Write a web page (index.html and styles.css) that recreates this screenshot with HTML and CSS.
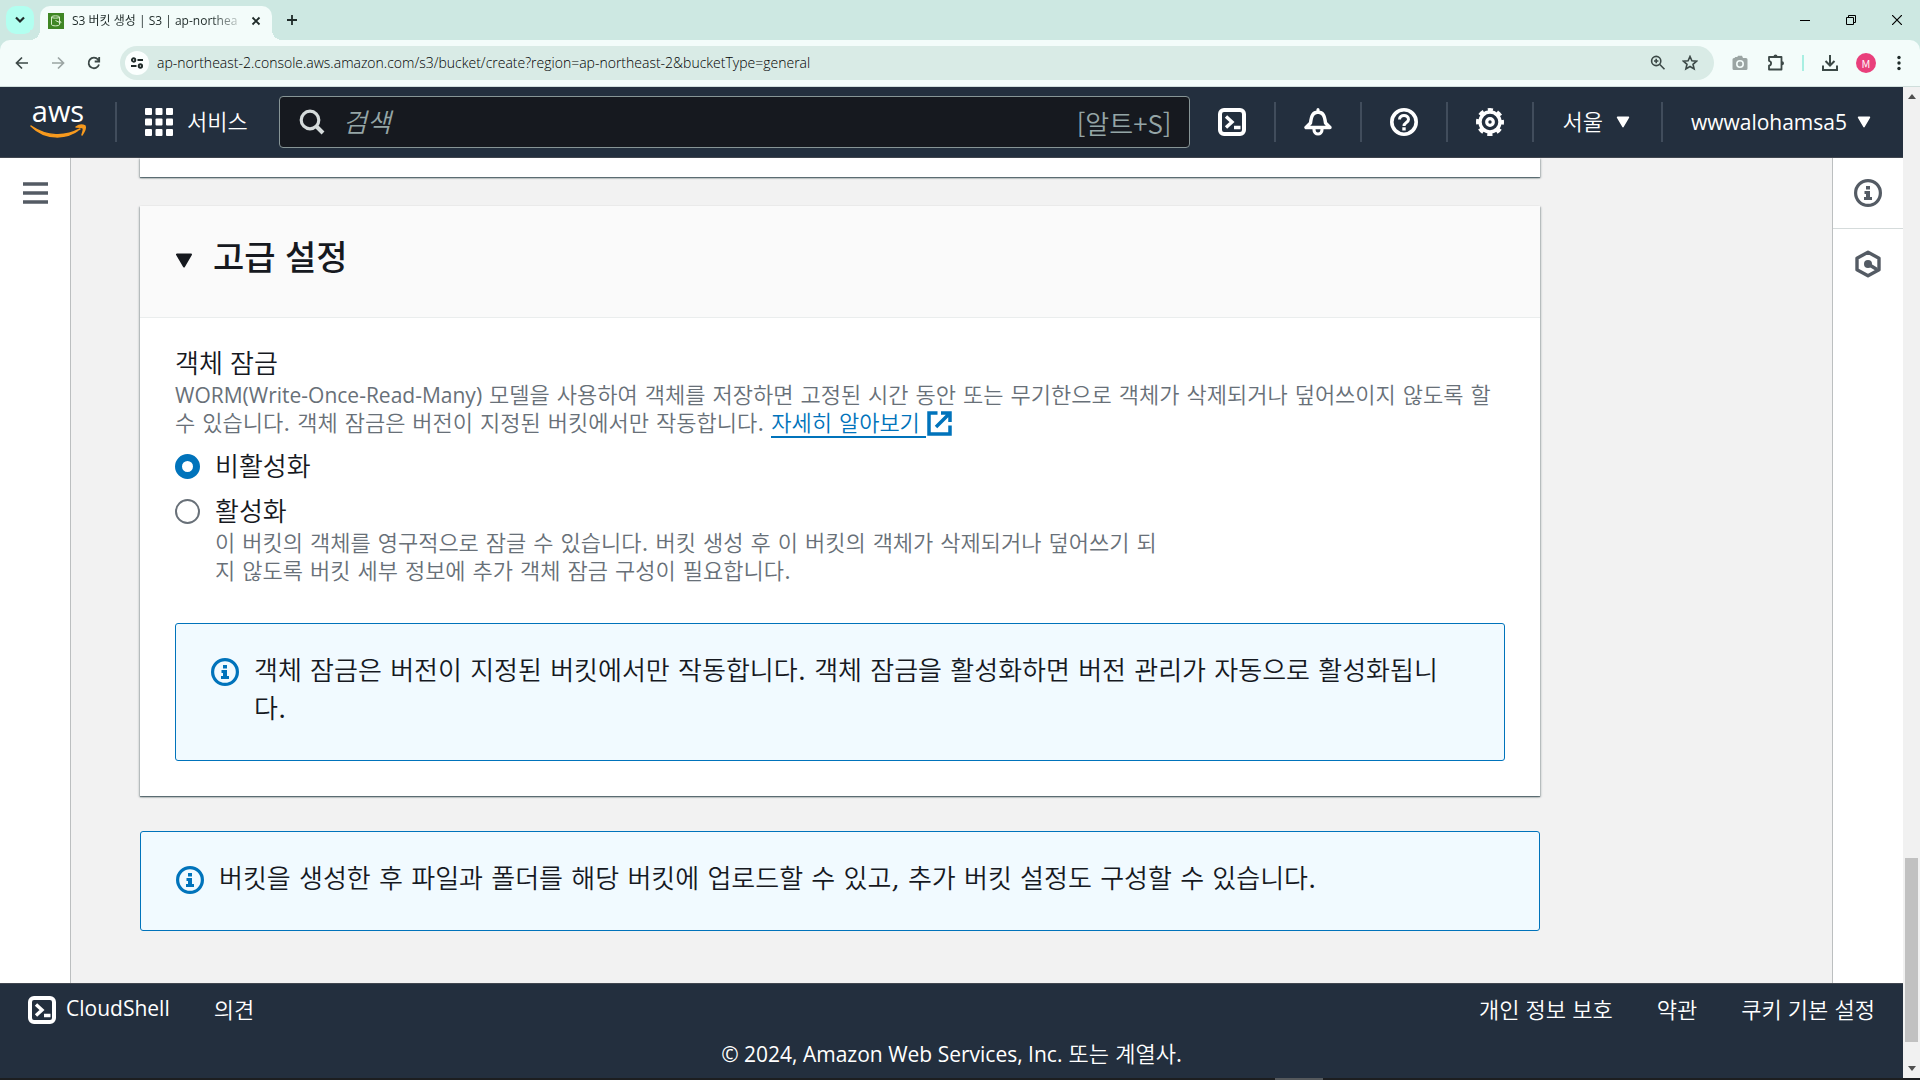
FILE: index.html
```html
<!DOCTYPE html>
<html lang="ko">
<head>
<meta charset="utf-8">
<meta name="viewport" content="width=device-width, initial-scale=1">
<title>S3 버킷 생성 | S3 | ap-northeast-2</title>
<link rel="stylesheet" href="styles.css">
</head>
<body>
<svg class="defs" aria-hidden="true">
  <symbol id="terminal" viewBox="0 0 28 28"><rect x="2" y="2" width="24" height="24" rx="4" fill="none" stroke="currentColor" stroke-width="4"/><path d="M8 8.500l6 5.500-6 5.500M16 19.500h6.500" fill="none" stroke="currentColor" stroke-width="3.400"/></symbol>
  <symbol id="info" viewBox="0 0 28 28"><circle cx="14" cy="14" r="12.400" fill="none" stroke="currentColor" stroke-width="3.200"/><path d="M12 7h4v3.500h-4zM10.500 12H16v6h2v3h-8v-3h2v-3h-1.500z" fill="currentColor"/></symbol>
  <symbol id="caret" viewBox="0 0 18 15"><path d="M2 1.500h14L9 13.500z" fill="currentColor" stroke="currentColor" stroke-width="2" stroke-linejoin="round"/></symbol>
</svg>

<div class="tabstrip">
  <button class="tab-search" aria-label="탭 검색"><svg width="12" height="8" viewBox="0 0 12 8"><path d="M2 1.500l4 4 4-4" fill="none" stroke="currentColor" stroke-width="2.200"/></svg></button>
  <div class="tab">
    <svg class="favicon" width="16" height="16" viewBox="0 0 16 16"><rect width="16" height="16" fill="#3f8624"/><path d="M3.500 4v7.500c0 1.800 8 1.800 8 0V4M3.500 4c0-1.500 8-1.500 8 0s-8 1.500-8 0zM7.500 7.500l4.500 2.200c1.500.5 1.500-1-.2-1.500" fill="none" stroke="#d9f0cc"/></svg>
    <span class="tab-title">S3 버킷 생성 | S3 | ap-northea</span>
    <button class="tab-close" aria-label="탭 닫기"><svg width="10" height="10" viewBox="0 0 10 10"><path d="M1.500 1.500l7 7m0-7l-7 7" stroke="currentColor" stroke-width="1.800"/></svg></button>
  </div>
  <button class="new-tab" aria-label="새 탭"><svg width="12" height="12" viewBox="0 0 12 12"><path d="M6 1v10M1 6h10" stroke="currentColor" stroke-width="1.800"/></svg></button>
  <div class="window-controls">
    <button aria-label="최소화"><svg width="10" height="10" viewBox="0 0 10 10"><path d="M0 5.500h10" stroke="currentColor"/></svg></button>
    <button aria-label="이전 크기로"><svg width="10" height="10" viewBox="0 0 10 10"><path d="M.5 2.500h7v7h-7zM2.500 2.500v-2h7v7h-2" fill="none" stroke="currentColor"/></svg></button>
    <button aria-label="닫기"><svg width="10" height="10" viewBox="0 0 10 10"><path d="M0 0l10 10M10 0L0 10" stroke="currentColor" stroke-width="1.200"/></svg></button>
  </div>
</div>

<div class="toolbar-back">
<div class="toolbar">
  <div class="nav-buttons">
    <button aria-label="뒤로"><svg width="16" height="16" viewBox="0 0 16 16"><path d="M14 8H3M8 2.500L2.500 8 8 13.500" fill="none" stroke="currentColor" stroke-width="1.700"/></svg></button>
    <button class="off" aria-label="앞으로"><svg width="16" height="16" viewBox="0 0 16 16"><path d="M2 8h11M8 2.500L13.500 8 8 13.500" fill="none" stroke="currentColor" stroke-width="1.700"/></svg></button>
    <button aria-label="새로고침"><svg width="16" height="16" viewBox="0 0 16 16"><path d="M13 9.500A5.300 5.300 0 1 1 12 4.500L13 6M13.200 2v4.500H8.700" fill="none" stroke="currentColor" stroke-width="1.800"/></svg></button>
  </div>
  <div class="omnibox">
    <button class="site-info" aria-label="사이트 정보"><svg width="14" height="14" viewBox="0 0 14 14" fill="none" stroke="currentColor" stroke-width="1.900"><circle cx="3.600" cy="4" r="1.700"/><path d="M7.500 4H13M1 10h5.500"/><circle cx="10.400" cy="10" r="1.700"/></svg></button>
    <input class="url" type="text" aria-label="주소" value="ap-northeast-2.console.aws.amazon.com/s3/bucket/create?region=ap-northeast-2&amp;bucketType=general">
    <button aria-label="확대"><svg width="16" height="16" viewBox="0 0 16 16" fill="none" stroke="currentColor" stroke-width="1.600"><circle cx="6.200" cy="6" r="4.600"/><path d="M9.800 9.500l4.700 4.700M6.200 3.800v4.400M4 6h4.400"/></svg></button>
    <button aria-label="즐겨찾기"><svg width="16" height="16" viewBox="0 0 16 16"><path d="M8 1.500l1.900 4.300 4.700.4-3.600 3.100 1.100 4.600L8 11.500l-4.100 2.400L5 9.300 1.400 6.200l4.700-.4z" fill="none" stroke="currentColor" stroke-width="1.600"/></svg></button>
  </div>
  <div class="extensions">
    <button class="off" aria-label="캡처"><svg width="20" height="20" viewBox="0 0 20 20"><path d="M4.500 5l.8-1h2L8 2.800h4L13 5h3a1.500 1.500 0 0 1 1.500 1.500v9A1.500 1.500 0 0 1 16 17H4a1.500 1.500 0 0 1-1.500-1.500v-9A1.500 1.500 0 0 1 4 5z" fill="currentColor"/><circle cx="10" cy="11" r="3.200" fill="none" stroke="#f3fcfa" stroke-width="1.600"/></svg></button>
    <button aria-label="확장 프로그램"><svg width="20" height="20" viewBox="0 0 20 20"><path d="M3 4h12.500v12.500H3v-3.800c2.800-.6 2.800-4.300 0-4.900z" fill="none" stroke="currentColor" stroke-width="1.800" stroke-linejoin="round"/><path d="M7.500 3.500a2 2 0 0 1 4 0zM16 8.300a2 2 0 0 1 0 4z" fill="currentColor"/></svg></button>
    <span class="ext-divider"></span>
    <button aria-label="다운로드"><svg width="20" height="20" viewBox="0 0 20 20"><path d="M10 2v10M5.500 8L10 12.500 14.500 8M3 12.500V17h14v-4.500" fill="none" stroke="currentColor" stroke-width="2"/></svg></button>
    <button class="avatar" aria-label="프로필">M</button>
    <button class="menu-dots" aria-label="메뉴"><svg width="4" height="16" viewBox="0 0 4 16" fill="currentColor"><circle cx="2" cy="2.500" r="1.700"/><circle cx="2" cy="8" r="1.700"/><circle cx="2" cy="13.500" r="1.700"/></svg></button>
  </div>
</div>
</div>

<div class="viewport">
  <div class="console">
    <header class="topnav">
      <a class="logo" href="#" aria-label="AWS"><svg width="58" height="60" viewBox="0 0 58 60"><text class="logo-text" x="28" y="30" text-anchor="middle">aws</text><path d="M1 34c16 11 34 11 49 3-14 11-35 11-49-3z" fill="#f79a1e" stroke="#f79a1e" stroke-width="1.500" stroke-linejoin="round"/><path d="M46 35c3-2 7-2 9-1 1 2-1 6-3 9 1-3 2-6 1-7s-4-1-7-1z" fill="#f79a1e" stroke="#f79a1e" stroke-width="1.500" stroke-linejoin="round"/></svg></a>
      <button class="services"><svg width="28" height="28" viewBox="0 0 28 28" fill="currentColor"><rect width="7" height="7" rx="1"/><rect x="10.500" width="7" height="7" rx="1"/><rect x="21" width="7" height="7" rx="1"/><rect y="10.500" width="7" height="7" rx="1"/><rect x="10.500" y="10.500" width="7" height="7" rx="1"/><rect x="21" y="10.500" width="7" height="7" rx="1"/><rect y="21" width="7" height="7" rx="1"/><rect x="10.500" y="21" width="7" height="7" rx="1"/><rect x="21" y="21" width="7" height="7" rx="1"/></svg><span class="bar-text">서비스</span></button>
      <div class="search">
        <svg width="26" height="26" viewBox="0 0 26 26" fill="none" stroke="currentColor"><circle cx="11" cy="11" r="8.800" stroke-width="3.200"/><path d="M17 17l7 7" stroke-width="4"/></svg>
        <input class="bar-text" type="search" placeholder="검색" aria-label="검색">
        <span class="shortcut">[알트+S]</span>
      </div>
      <button class="tool" aria-label="CloudShell"><svg width="28" height="28"><use href="#terminal"/></svg></button>
      <button class="tool" aria-label="알림"><svg width="28" height="28" viewBox="0 0 28 28" fill="none" stroke="currentColor" stroke-linejoin="round" stroke-linecap="round"><path d="M2 19.500h24l-4.500-4.500C20.500 7 19 4.500 14 4 9 4.500 7.500 7 6.500 15z" stroke-width="3.400"/><path d="M14 1.500v2" stroke-width="3"/><path d="M10 21.500c0 6 8 6 8 0" stroke-width="3.200"/></svg></button>
      <button class="tool" aria-label="도움말"><svg width="28" height="28" viewBox="0 0 28 28" fill="none" stroke="currentColor"><circle cx="14" cy="14" r="12.200" stroke-width="3.600"/><path d="M9.500 11.500c0-5.500 9-5.500 9 0 0 3-4.500 3-4.500 6.500" stroke-width="3"/><path d="M14 19.300v3.200" stroke-width="3.400"/></svg></button>
      <button class="tool" aria-label="설정"><svg width="28" height="28" viewBox="0 0 28 28" fill="none" stroke="currentColor"><circle cx="14" cy="14" r="10" stroke-width="3.400"/><circle cx="14" cy="14" r="12.400" stroke-width="3.200" stroke-dasharray="5.200 4.540" stroke-dashoffset="2.600"/><circle cx="14" cy="14" r="3.300" stroke-width="3.200"/></svg></button>
      <button class="menu region"><span class="bar-text">서울</span><svg width="14" height="12"><use href="#caret"/></svg></button>
      <button class="menu account"><span class="latin">wwwalohamsa5</span><svg width="14" height="12"><use href="#caret"/></svg></button>
    </header>

    <div class="workspace">
      <nav class="side side-left">
        <button aria-label="탐색 열기"><svg width="25" height="22" viewBox="0 0 25 22"><path d="M0 2h25M0 11h25M0 20h25" stroke="currentColor" stroke-width="3.500"/></svg></button>
      </nav>

      <main class="content">
        <section class="card card-tail"></section>

        <section class="card">
          <header class="card-header">
            <h2><button class="expander"><svg width="18" height="15"><use href="#caret"/></svg><span>고급 설정</span></button></h2>
          </header>
          <div class="card-body">
            <fieldset class="field">
              <legend>객체 잠금</legend>
              <p class="hint"><span class="latin">WORM(Write-Once-Read-Many)</span> 모델을 사용하여 객체를 저장하면 고정된 시간 동안 또는 무기한으로 객체가 삭제되거나 덮어쓰이지 않도록 할<br>수 있습니다. 객체 잠금은 버전이 지정된 버킷에서만 작동합니다. <a class="learn-more" href="#"><span>자세히 알아보기</span><svg width="25" height="25" viewBox="0 0 25 25" fill="none" stroke="currentColor" stroke-width="3.500"><path d="M10.500 2H2v21h21v-8.500M14 2h9v9M22.500 2.500L9 16"/></svg></a></p>
              <div class="option">
                <input type="radio" name="object-lock" id="lock-off" checked>
                <label for="lock-off">비활성화</label>
              </div>
              <div class="option">
                <input type="radio" name="object-lock" id="lock-on" aria-describedby="lock-on-hint">
                <div>
                  <label for="lock-on">활성화</label>
                  <p class="hint" id="lock-on-hint">이 버킷의 객체를 영구적으로 잠글 수 있습니다. 버킷 생성 후 이 버킷의 객체가 삭제되거나 덮어쓰기 되<br>지 않도록 버킷 세부 정보에 추가 객체 잠금 구성이 필요합니다.</p>
                </div>
              </div>
            </fieldset>
            <div class="alert">
              <svg width="28" height="28"><use href="#info"/></svg>
              <p>객체 잠금은 버전이 지정된 버킷에서만 작동합니다. 객체 잠금을 활성화하면 버전 관리가 자동으로 활성화됩니<br>다.</p>
            </div>
          </div>
        </section>

        <div class="alert alert-page">
          <svg width="28" height="28"><use href="#info"/></svg>
          <p>버킷을 생성한 후 파일과 폴더를 해당 버킷에 업로드할 수 있고, 추가 버킷 설정도 구성할 수 있습니다.</p>
        </div>
      </main>

      <aside class="side side-right">
        <button aria-label="정보"><svg width="28" height="28"><use href="#info"/></svg></button>
        <button aria-label="도구"><svg width="28" height="28" viewBox="0 0 28 28" fill="none" stroke="currentColor"><path d="M14 2.200l11 6v11.600l-11 6-11-6V8.200z" stroke-width="3.400" stroke-linejoin="round"/><circle cx="14" cy="14" r="4" fill="currentColor" stroke="none"/><path d="M14 14l9 5.500" stroke-width="3.400"/></svg></button>
      </aside>
    </div>

    <footer class="footer">
      <div class="footer-row">
        <button class="cloudshell"><svg width="28" height="28"><use href="#terminal"/></svg><span class="latin bar-text">CloudShell</span></button>
        <a class="bar-text" href="#">의견</a>
        <div class="legal bar-text"><a href="#">개인 정보 보호</a><a href="#">약관</a><a href="#">쿠키 기본 설정</a></div>
      </div>
      <p class="copyright"><span class="latin">© 2024, Amazon Web Services, Inc.</span> 또는 계열사.</p>
    </footer>
  </div>

  <div class="scrollbar" aria-hidden="true">
    <svg width="8" height="5" viewBox="0 0 8 5"><path d="M0 5l4-5 4 5z" fill="#505050"/></svg>
    <span class="track-before"></span>
    <span class="thumb"></span>
    <span class="track-after"></span>
    <svg width="8" height="5" viewBox="0 0 8 5"><path d="M0 0l4 5 4-5z" fill="#505050"/></svg>
  </div>
</div>
<div class="taskbar"><span class="taskbar-item"></span></div>
</body>
</html>
```

FILE: styles.css
```css
* { box-sizing: border-box; }

body {
  margin: 0;
  min-height: 100vh;
  display: flex;
  flex-direction: column;
  background: #f2f2f2;
  color: #16191f;
  font-family: "Noto Sans CJK KR", sans-serif;
  font-size: 22px;
  font-weight: 350;
}

button, input { font: inherit; color: inherit; }
button { padding: 0; border: 0; background: none; display: flex; align-items: center; justify-content: center; }
a { color: inherit; text-decoration: none; }
p, h2 { margin: 0; }
svg { display: block; flex: none; }
.defs { position: absolute; width: 0; height: 0; }
.latin { font-family: "Open Sans", sans-serif; font-size: 21px; line-height: 1; font-weight: 500; }

/* Browser chrome */
.tabstrip {
  display: flex;
  align-items: center;
  height: 40px;
  padding-left: 6px;
  background: #cde8e2;
  color: #1f2b29;
}
.tab-search { width: 28px; height: 28px; border-radius: 10px; background: #b2fff0; }
.tab {
  align-self: flex-end;
  display: flex;
  align-items: center;
  width: 232px;
  height: 34px;
  margin-left: 6px;
  padding: 0 6px 4px 8px;
  border-radius: 10px 10px 0 0;
  background: #f3fcfa;
  position: relative;
}
.tab::before, .tab::after {
  content: "";
  position: absolute;
  bottom: 0;
  width: 10px;
  height: 10px;
}
.tab::before { left: -10px; background: radial-gradient(circle at 0 0, #cde8e2 10px, #f3fcfa 10px); }
.tab::after { right: -10px; background: radial-gradient(circle at 100% 0, #cde8e2 10px, #f3fcfa 10px); }
.tab-title {
  flex: 1;
  margin-left: 8px;
  white-space: nowrap;
  font-family: "Open Sans", "Noto Sans CJK KR", sans-serif;
  font-size: 12px;
  line-height: 20px;
  font-weight: 400;
  -webkit-mask-image: linear-gradient(to right, #000 80%, transparent 100%);
  mask-image: linear-gradient(to right, #000 80%, transparent 100%);
}
.tab-close { width: 20px; height: 20px; }
.new-tab { width: 28px; height: 28px; margin-left: 6px; }
.window-controls { display: flex; margin-left: auto; color: #000; }
.window-controls button { width: 46px; height: 40px; }

.toolbar-back { background: #cde8e2; }
.toolbar {
  display: flex;
  align-items: center;
  height: 47px;
  border-radius: 10px 10px 0 0;
  border-bottom: 1px solid #cfdedb;
  background: #f3fcfa;
  color: #3c4947;
}
.nav-buttons { display: flex; padding: 0 8px 0 4px; }
.nav-buttons button { width: 36px; height: 36px; }
.off { color: #9ba5a3; }
.omnibox {
  flex: 1;
  display: flex;
  align-items: center;
  gap: 8px;
  height: 34px;
  padding: 0 12px 0 5px;
  border-radius: 17px;
  background: #d9ebe6;
}
.omnibox button { width: 24px; height: 24px; }
.omnibox .site-info { border-radius: 50%; background: #fbfffe; color: #1f2b29; }
.url {
  flex: 1;
  min-width: 0;
  padding: 0;
  border: 0;
  outline: 0;
  background: none;
  font-family: "Open Sans", sans-serif;
  font-size: 14px;
  line-height: 20px;
  font-weight: 300;
  color: #000;
}
.extensions { display: flex; align-items: center; gap: 16px; padding: 0 14px 0 16px; }
.ext-divider { width: 2px; height: 16px; background: #a8efe2; }
.avatar { width: 20px; height: 20px; border-radius: 50%; background: #e93f7b; color: #fff; font-size: 11px; }
.menu-dots { width: 14px; color: #1f2b29; }

/* Console */
.viewport { flex: 1; display: flex; }
.console { flex: 1; min-width: 0; display: flex; flex-direction: column; }
.bar-text { padding: 0 0 4px; }

.topnav {
  display: flex;
  align-items: center;
  height: 71px;
  border-bottom: 1px solid #414750;
  background: #232f3e;
  color: #fff;
}
.logo, .services, .tool, .menu { height: 40px; display: flex; align-items: center; }
.logo { width: 117px; padding-left: 30px; border-right: 2px solid #414d5c; }
.logo-text { font-family: "Open Sans", sans-serif; font-size: 29px; font-weight: 500; fill: #fff; }
.services { width: 162px; padding-left: 28px; gap: 14px; justify-content: flex-start; }
.search {
  flex: 1;
  display: flex;
  align-items: center;
  gap: 18px;
  height: 52px;
  padding: 0 18px 0 19px;
  border: 1px solid #879596;
  border-radius: 4px;
  background: #16191f;
  color: #d5dbdb;
}
.search input { flex: 1; min-width: 0; border: 0; outline: 0; background: none; font-size: 26px; }
.search input::placeholder { color: #95a5a6; opacity: 1; font-style: italic; }
.shortcut { font-size: 26px; color: #95a5a6; }
.tool { width: 86px; border-right: 2px solid #414d5c; }
.menu { justify-content: flex-start; }
.region { gap: 13px; padding: 0 31px 0 28px; border-right: 2px solid #414d5c; }
.account { gap: 10px; padding: 0 32px 0 28px; }

.workspace { flex: 1; display: flex; }
.side { flex: none; width: 71px; background: #fff; color: #545b64; }
.side button { width: 100%; height: 70px; }
.side-left { border-right: 1px solid #bcbfc0; }
.side-right { border-left: 1px solid #bcbfc0; }
.side-right button + button { border-top: 1px solid #d5dbdb; }

.content { flex: 1; min-width: 0; padding: 0 69px 48px; }
.content > * { max-width: 1400px; }
.card {
  background: #fff;
  box-shadow: 0 1px 1px rgba(0, 28, 36, .45), 1px 1px 2px rgba(0, 28, 36, .25), -1px 1px 2px rgba(0, 28, 36, .25);
}
.card-tail { height: 19px; margin-bottom: 29px; }
.card-header { padding: 26px 35px 37px; border-bottom: 1px solid #eaeded; background: #fafafa; }
.card-header h2 { font-size: 34px; line-height: 48px; font-weight: 500; }
.expander { gap: 20px; }
.expander svg { margin-top: 8px; }
.card-body { padding: 27px 35px 35px; }
.field { margin: 0 0 37px; padding: 0; border: 0; min-width: 0; }
.field legend { padding: 0 0 3px; font-size: 26px; line-height: 34px; }
.hint { font-size: 22px; line-height: 28px; color: #687078; white-space: nowrap; }
.hint, .alert { font-family: "DejaVu Serif", "Noto Sans CJK KR", sans-serif; }
.learn-more { color: #0073bb; }
.learn-more span { border-bottom: 2px solid #0073bb; padding-right: 6px; }
.learn-more svg { display: inline-block; vertical-align: -5px; margin-left: 1px; }
.option { display: flex; gap: 15px; margin-top: 9px; font-size: 26px; line-height: 36px; }
.option label { display: block; }
.option .hint { margin-top: 2px; }
.option input {
  appearance: none;
  flex: none;
  width: 25px;
  height: 25px;
  margin: 7px 0 0;
  border: 2px solid #687078;
  border-radius: 50%;
  background: #fff;
}
.option input:checked { border: 7px solid #0073bb; }
.alert {
  display: flex;
  gap: 15px;
  padding: 28px 34px 32px 35px;
  border: 1px solid #0073bb;
  border-radius: 3px;
  background: #f1faff;
  font-size: 26px;
  line-height: 38px;
}
.alert p { white-space: nowrap; }
.alert svg { margin-top: 6px; color: #0073bb; }
.alert-page { margin-top: 35px; }

.footer { border-top: 1px solid #414750; background: #232f3e; color: #fff; padding: 8px 28px 10px; }
.footer-row { display: flex; align-items: center; gap: 44px; height: 36px; }
.cloudshell { gap: 10px; }
.legal { display: flex; gap: 44px; margin-left: auto; }
.copyright { margin-top: 8px; line-height: 32px; text-align: center; }

.scrollbar { flex: none; width: 17px; display: flex; flex-direction: column; align-items: center; padding: 7px 0; background: #f1f1f1; }
.track-before { flex: 759; }
.thumb { flex: 184; width: 13px; background: #c1c1c1; }
.track-after { flex: 24; }

.taskbar { display: flex; height: 2px; padding-left: 66.4%; background: #1c1e20; }
.taskbar-item { width: 48px; background: #55595c; }
```
